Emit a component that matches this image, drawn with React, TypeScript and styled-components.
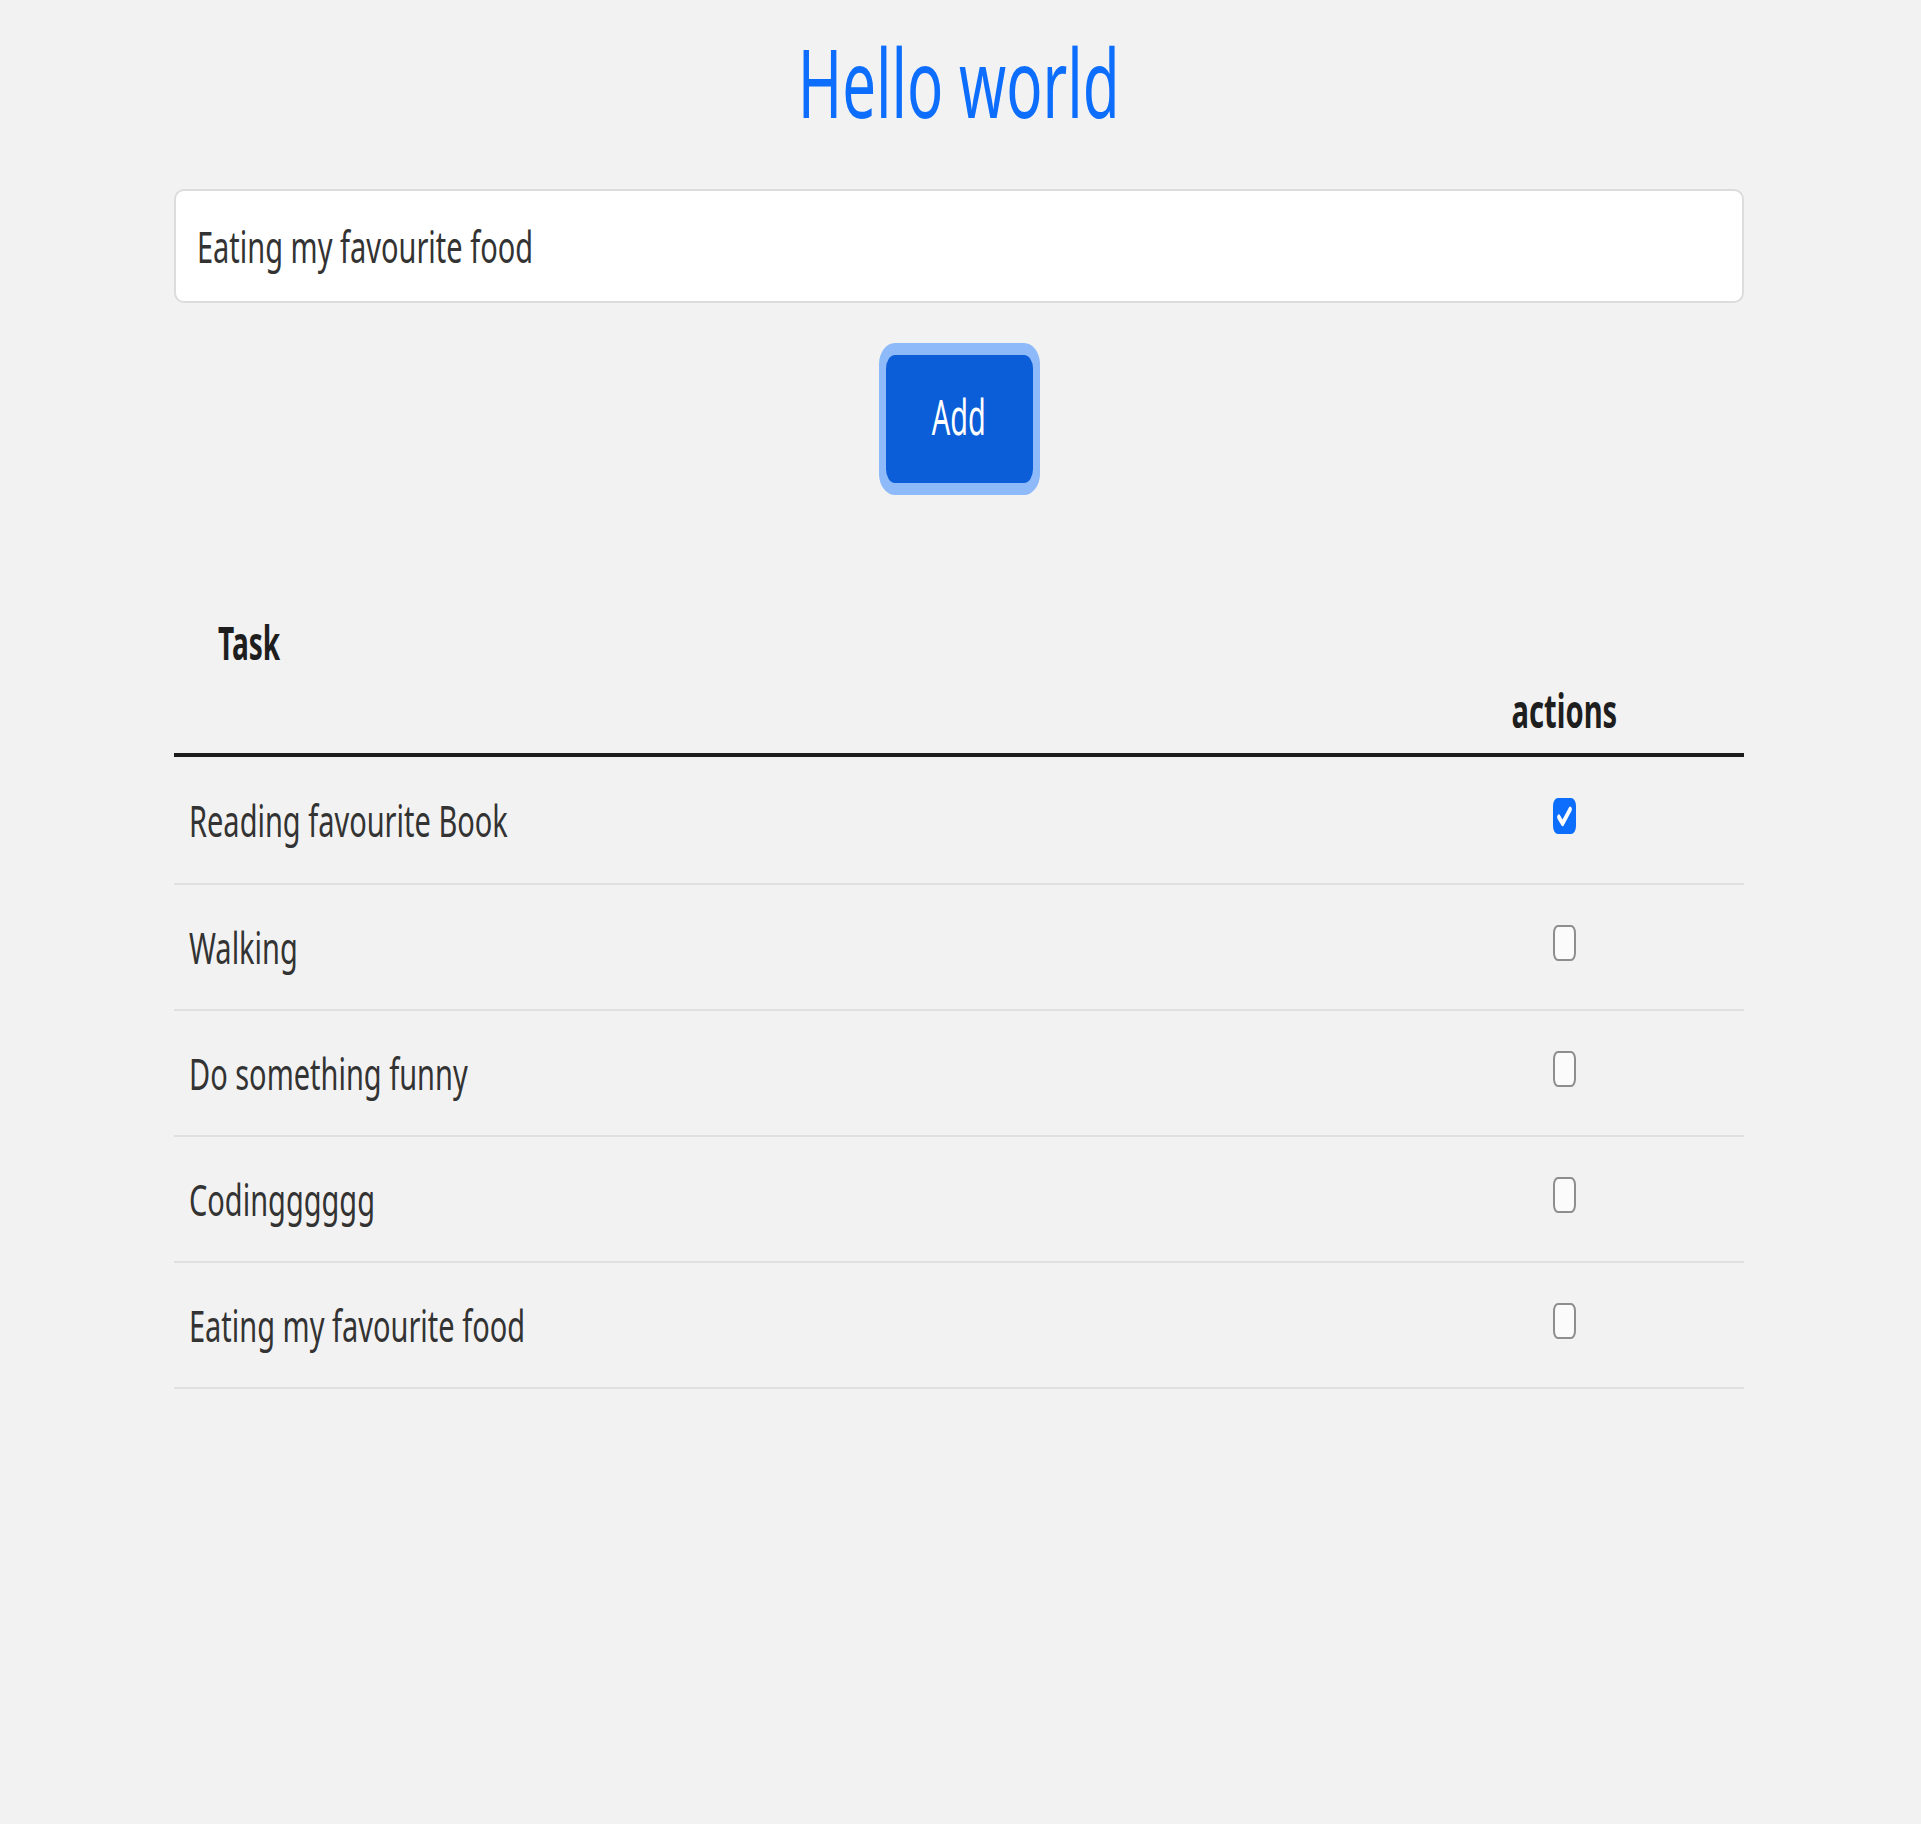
import React, { useState } from 'react';
import styled, { createGlobalStyle } from 'styled-components';

const ROW_SX = 0.674;

const Global = createGlobalStyle`
  html, body { margin: 0; padding: 0; background: #f2f2f2; }
  body { font-family: "Noto Sans", "Open Sans", "DejaVu Sans", sans-serif; color: #2c2c2c; }
  *, *::before, *::after { box-sizing: border-box; }
`;

const Page = styled.main`
  height: 1824px;
  overflow: hidden;
  padding: 34px 177px 0 174px;
  display: flex;
  flex-direction: column;
`;

const Squeeze = styled.span<{ $sx: number; $origin?: string }>`
  display: inline-block;
  white-space: nowrap;
  transform: scaleX(${(p) => p.$sx});
  transform-origin: ${(p) => p.$origin ?? 'left center'};
`;

const Title = styled.h1`
  margin: 0;
  height: 95px;
  font-size: 95px;
  line-height: 95px;
  font-weight: 400;
  color: #0d6efd;
  text-align: center;
`;

const InputBox = styled.div`
  margin-top: 60px;
  height: 114px;
  background: #ffffff;
  border: 2px solid #dcdcdc;
  border-radius: 10px;
  display: flex;
  align-items: center;
  padding-left: 21px;
  overflow: hidden;
`;

const TaskInput = styled.input`
  flex: none;
  width: ${100 / ROW_SX}%;
  height: 100%;
  transform: scaleX(${ROW_SX});
  transform-origin: left center;
  border: none;
  background: transparent;
  outline: none;
  padding: 0;
  font-family: inherit;
  font-size: 43px;
  color: #333333;
`;

const ButtonRow = styled.div`
  display: flex;
  justify-content: center;
  margin-top: 52px;
`;

const AddButton = styled.button`
  width: 147px;
  height: 128px;
  border: none;
  border-radius: 9px / 14px;
  background: #0b5ed7;
  color: #ffffff;
  font-family: inherit;
  font-size: 49px;
  line-height: 49px;
  padding: 0 0 6px;
  cursor: pointer;
  box-shadow: 0 0 0 7px #8fbaf9, 0 5px 0 7px #8fbaf9, 0 -5px 0 7px #8fbaf9;
`;

const HeadRow = styled.div`
  display: grid;
  grid-template-columns: 1fr 360px;
  height: 274px;
  border-bottom: 4px solid #1c1c1c;
`;

const HeadCell = styled.div<{ $pos: 'top' | 'bottom' }>`
  font-size: 46px;
  line-height: 46px;
  font-weight: 700;
  color: #1e1e1e;
  align-self: ${(p) => (p.$pos === 'top' ? 'start' : 'end')};
  padding: ${(p) => (p.$pos === 'top' ? '136px 0 0 44px' : '0 0 20px 0')};
  text-align: ${(p) => (p.$pos === 'top' ? 'left' : 'center')};
`;

const Body = styled.div`
  display: flex;
  flex-direction: column;
`;

const Row = styled.div`
  display: grid;
  grid-template-columns: 1fr 360px;
  height: 126px;
  align-items: center;
  border-bottom: 2px solid #e0e0e0;

  &:first-child {
    height: 128px;
  }
`;

const TaskText = styled.div`
  padding-left: 15px;
  font-size: 43px;
  line-height: 43px;
  color: #333333;
`;

const ActionCell = styled.div`
  display: flex;
  justify-content: center;
`;

const Check = styled.button<{ $checked: boolean }>`
  width: 23px;
  height: 36px;
  margin-bottom: 8px;
  padding: 0;
  border-radius: 5px / 8px;
  border: 2px solid ${(p) => (p.$checked ? '#0d6efd' : '#8e8e8e')};
  background: ${(p) => (p.$checked ? '#0d6efd' : '#fbfbfb')};
  display: flex;
  align-items: center;
  justify-content: center;
  cursor: pointer;
`;

type Task = { id: number; title: string; done: boolean };

const initial: Task[] = [
  { id: 1, title: 'Reading favourite Book', done: true },
  { id: 2, title: 'Walking', done: false },
  { id: 3, title: 'Do something funny', done: false },
  { id: 4, title: 'Codingggggg', done: false },
  { id: 5, title: 'Eating my favourite food', done: false },
];

export default function App() {
  const [tasks, setTasks] = useState<Task[]>(initial);
  const [text, setText] = useState('Eating my favourite food');

  const toggle = (id: number) =>
    setTasks((ts) => ts.map((t) => (t.id === id ? { ...t, done: !t.done } : t)));

  const add = () => {
    if (!text.trim()) return;
    setTasks((ts) => [...ts, { id: Date.now(), title: text, done: false }]);
  };

  return (
    <>
      <Global />
      <Page>
        <Title>
          <Squeeze $sx={0.632} $origin="center center">Hello world</Squeeze>
        </Title>
        <InputBox>
          <TaskInput value={text} onChange={(e) => setText(e.target.value)} />
        </InputBox>
        <ButtonRow>
          <AddButton onClick={add}>
            <Squeeze $sx={0.59} $origin="center center">Add</Squeeze>
          </AddButton>
        </ButtonRow>
        <HeadRow>
          <HeadCell $pos="top">
            <Squeeze $sx={0.61}>Task</Squeeze>
          </HeadCell>
          <HeadCell $pos="bottom">
            <Squeeze $sx={0.634} $origin="center center">actions</Squeeze>
          </HeadCell>
        </HeadRow>
        <Body>
          {tasks.map((t) => (
            <Row key={t.id}>
              <TaskText>
                <Squeeze $sx={ROW_SX}>{t.title}</Squeeze>
              </TaskText>
              <ActionCell>
                <Check
                  role="checkbox"
                  aria-checked={t.done}
                  $checked={t.done}
                  onClick={() => toggle(t.id)}
                >
                  {t.done && (
                    <svg width="19" height="30" viewBox="0 0 16 16" preserveAspectRatio="none">
                      <path
                        d="M3.2 8.6l3.2 3.4 6.4-7.6"
                        fill="none"
                        stroke="#ffffff"
                        strokeWidth="2.8"
                        strokeLinecap="round"
                        strokeLinejoin="round"
                      />
                    </svg>
                  )}
                </Check>
              </ActionCell>
            </Row>
          ))}
        </Body>
      </Page>
    </>
  );
}
